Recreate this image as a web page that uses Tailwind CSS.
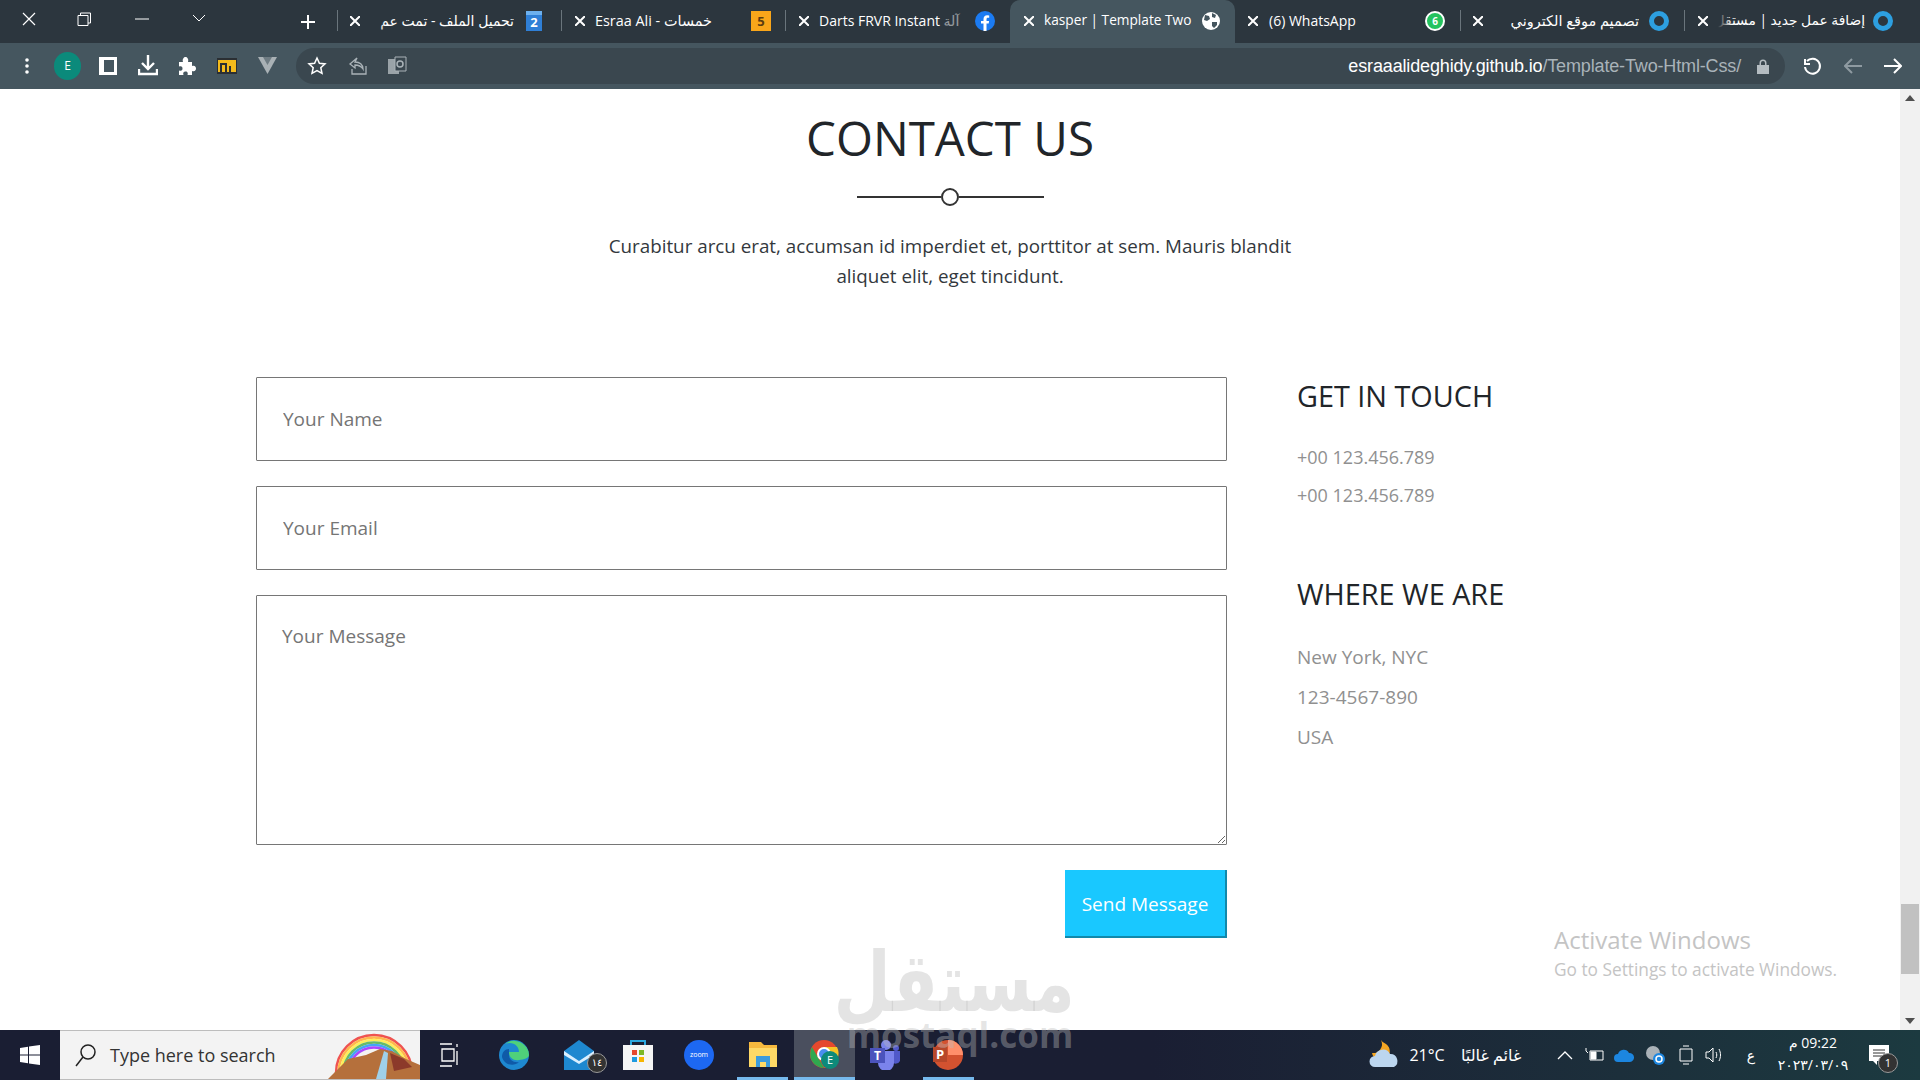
<!DOCTYPE html>
<html lang="en">
<head>
    <meta charset="UTF-8">
    <title>kasper | Template Two</title>
    <script src="https://cdn.jsdelivr.net/npm/@tailwindcss/browser@4"></script>
</head>
<body class="relative w-[1920px] h-[1080px] overflow-hidden bg-white font-['Open_Sans','DejaVu_Sans',sans-serif]">
<div class="flex flex-col h-full">

    <!-- tab strip -->
    <div class="flex items-center h-[43px] bg-[#2c363e] text-white shrink-0">
        <div class="flex items-center w-[337px] h-full shrink-0 relative">
            <svg class="absolute left-[21px] top-[11px]" width="16" height="16" viewBox="0 0 16 16" stroke="#fff" stroke-width="1.2" fill="none"><path d="M2 2l12 12M14 2L2 14"/></svg>
            <svg class="absolute left-[77px] top-[12px]" width="14" height="14" viewBox="0 0 14 14" stroke="#fff" stroke-width="1" fill="none"><path d="M1 3.5h10v10H1zM3.5 3.500V1h10v10h-2.500"/></svg>
            <svg class="absolute left-[135px] top-[12px]" width="14" height="14" viewBox="0 0 14 14" stroke="#fff" stroke-width="1" fill="none"><path d="M0 7h14"/></svg>
            <svg class="absolute left-[192px] top-[14px]" width="14" height="9" viewBox="0 0 14 9" stroke="#fff" stroke-width="1" fill="none"><path d="M1 1l6 6 6-6"/></svg>
            <svg class="absolute left-[300px] top-[14px]" width="16" height="16" viewBox="0 0 16 16" stroke="#fff" stroke-width="2" fill="none"><path d="M8 1v14M1 8h14"/></svg>
        </div>

        <div class="flex items-center w-[224px] h-full relative text-[14px] pb-[2px]">
            <div class="absolute left-0 top-[10px] h-[21px] w-px bg-[#6a757c]"></div>
            <svg class="ml-[13px] shrink-0" width="10" height="10" viewBox="0 0 10 10" stroke="#fff" stroke-width="2"><path d="M0 0l10 10M10 0L0 10"/></svg>
            <div class="ml-[10px] w-[144px] overflow-hidden whitespace-nowrap text-right relative" dir="rtl">تحميل الملف - تمت عم<div class="absolute left-0 top-0 h-full w-[14px] bg-gradient-to-r from-[#2c363e] to-transparent"></div></div>
            <svg class="ml-[12px] shrink-0" width="16" height="20" viewBox="0 0 16 20"><path d="M0 0h16v20H0z" fill="#2f7fd6"/><path d="M0 0h16v4H0z" fill="#6cb0ee"/><text x="8" y="16" font-size="13" font-weight="700" text-anchor="middle" fill="#fff">2</text></svg>
        </div>

        <div class="flex items-center w-[224px] h-full relative text-[14px] pb-[2px]">
            <div class="absolute left-0 top-[10px] h-[21px] w-px bg-[#6a757c]"></div>
            <svg class="ml-[14px] shrink-0" width="10" height="10" viewBox="0 0 10 10" stroke="#fff" stroke-width="2"><path d="M0 0l10 10M10 0L0 10"/></svg>
            <div class="ml-[10px] w-[150px] whitespace-nowrap text-left text-[14.400px]" dir="rtl">خمسات - Esraa Ali</div>
            <div class="ml-[6px] w-[20px] h-[20px] bg-[#f9a61a] text-[#5c3d10] text-[13px] font-bold leading-[20px] text-center shrink-0">5</div>
        </div>

        <div class="flex items-center w-[225px] h-full relative text-[14px] pb-[2px]">
            <div class="absolute left-0 top-[10px] h-[21px] w-px bg-[#6a757c]"></div>
            <svg class="ml-[14px] shrink-0" width="10" height="10" viewBox="0 0 10 10" stroke="#fff" stroke-width="2"><path d="M0 0l10 10M10 0L0 10"/></svg>
            <div class="ml-[10px] w-[145px] whitespace-nowrap relative">Darts FRVR Instant <span class="opacity-50">آلة</span></div>
            <svg class="ml-[11px] shrink-0" width="20" height="20" viewBox="0 0 20 20"><circle cx="10" cy="10" r="10" fill="#1b7bf2"/><path d="M8.500 20v-7.500H6V10h2.500V8c0-2.500 1.500-3.800 3.700-3.800l2 .2v2.300h-1.200c-1.200 0-1.500.7-1.500 1.500V10h2.600l-.4 2.500h-2.200V20z" fill="#fff"/></svg>
        </div>

        <div class="flex items-center w-[225px] h-full relative text-[13.700px] bg-[#45565f] rounded-t-[10px] pb-[2px]">
            <svg class="ml-[14px] shrink-0" width="10" height="10" viewBox="0 0 10 10" stroke="#fff" stroke-width="2"><path d="M0 0l10 10M10 0L0 10"/></svg>
            <div class="ml-[10px] w-[152px] whitespace-nowrap">kasper | Template Two</div>
            <svg class="ml-[6px] shrink-0" width="18" height="18" viewBox="0 0 18 18"><circle cx="9" cy="9" r="9" fill="#fff"/><path d="M3 3l4 1 1 3-3 2-3-1zM10 1l4 2-1 3-3-1zM10 10l5 0 0 3-3 3-2-2z" fill="#45565f"/></svg>
        </div>

        <div class="flex items-center w-[225px] h-full relative text-[14px] pb-[2px]">
            <svg class="ml-[13px] shrink-0" width="10" height="10" viewBox="0 0 10 10" stroke="#fff" stroke-width="2"><path d="M0 0l10 10M10 0L0 10"/></svg>
            <div class="ml-[11px] w-[156px] whitespace-nowrap">(6) WhatsApp</div>
            <div class="w-[20px] h-[20px] rounded-full bg-[#25c35f] border-2 border-white text-[10px] font-bold leading-[16px] text-center shrink-0">6</div>
        </div>

        <div class="flex items-center w-[224px] h-full relative text-[14px] pb-[2px]">
            <div class="absolute left-0 top-[10px] h-[21px] w-px bg-[#6a757c]"></div>
            <svg class="ml-[13px] shrink-0" width="10" height="10" viewBox="0 0 10 10" stroke="#fff" stroke-width="2"><path d="M0 0l10 10M10 0L0 10"/></svg>
            <div class="ml-[10px] w-[146px] overflow-hidden whitespace-nowrap text-right relative text-[14.500px]" dir="rtl">تصميم موقع الكتروني<div class="absolute left-0 top-0 h-full w-[8px] bg-gradient-to-r from-[#2c363e] to-transparent"></div></div>
            <div class="ml-[10px] w-[20px] h-[20px] rounded-full border-[5px] border-[#2d9fe0] shrink-0"></div>
        </div>

        <div class="flex items-center flex-1 h-full relative text-[13.800px] pb-[2px]">
            <div class="absolute left-0 top-[10px] h-[21px] w-px bg-[#6a757c]"></div>
            <svg class="ml-[14px] shrink-0" width="10" height="10" viewBox="0 0 10 10" stroke="#fff" stroke-width="2"><path d="M0 0l10 10M10 0L0 10"/></svg>
            <div class="ml-[10px] w-[147px] overflow-hidden whitespace-nowrap text-right relative" dir="rtl">إضافة عمل جديد | مستقل<div class="absolute left-0 top-0 h-full w-[14px] bg-gradient-to-r from-[#2c363e] to-transparent"></div></div>
            <div class="ml-[8px] w-[20px] h-[20px] rounded-full border-[5px] border-[#2d9fe0] shrink-0"></div>
        </div>
    </div>

    <!-- toolbar -->
    <div class="flex items-center h-[46px] bg-[#45565f] shrink-0 text-white">
        <div class="flex items-center w-[296px] h-full shrink-0 relative">
            <svg class="absolute left-[25px] top-[15px]" width="4" height="16" viewBox="0 0 4 16" fill="#fff"><circle cx="2" cy="2" r="1.800"/><circle cx="2" cy="8" r="1.800"/><circle cx="2" cy="14" r="1.800"/></svg>
            <div class="absolute left-[54px] top-[9px] w-[27px] h-[28px] rounded-full bg-[#0b8a7b] text-[12px] leading-[28px] text-center">E</div>
            <svg class="absolute left-[99px] top-[14px]" width="18" height="18" viewBox="0 0 18 18"><path d="M0 0h18v18H0z" fill="#fff"/><path d="M5 3h10v12H5z" fill="#45565f"/></svg>
            <svg class="absolute left-[138px] top-[12px]" width="20" height="21" viewBox="0 0 20 21" stroke="#fff" stroke-width="2.400" fill="none"><path d="M10 0v13M4 8l6 6 6-6M1 14v5h18v-5"/></svg>
            <svg class="absolute left-[178px] top-[14px]" width="18" height="18" viewBox="0 0 18 18" fill="#fff"><path d="M1 5h4c-1-3 1-5 2.500-5S11 2 10 5h4v4c3-1 4 1 4 2.500S17 15 14 14v4H9.500c1-3-1-3.500-2-3.500S4.500 15 5.500 18H1v-4.500c3 1 3.500-1 3.500-2S4 8.500 1 9.500z"/></svg>
            <svg class="absolute left-[217px] top-[15px]" width="20" height="16" viewBox="0 0 20 16"><path d="M0 0h20v16H0z" fill="#2b2f33"/><path d="M1 2h18v12H1z" fill="#f4bb1b"/><path d="M3 5h7v9H8V7H5v7H3zM12 8h2v6h-2z" fill="#2b2f33"/></svg>
            <svg class="absolute left-[258px] top-[14px]" width="19" height="17" viewBox="0 0 19 17"><path d="M0 0h19L9.500 17z" fill="#a9b1b5"/><path d="M5 0h9l-4.500 8z" fill="#6f7c83"/></svg>
        </div>
        <div class="flex items-center justify-between w-[1489px] h-[36px] rounded-full bg-[#3a474f] shrink-0 pl-[11px] pr-[16px]">
            <div class="flex items-center gap-[20px]">
                <svg width="20" height="20" viewBox="0 0 20 20" fill="none" stroke="#fff" stroke-width="1.500"><path d="M10 2l2.400 5.300 5.600.6-4.200 3.800 1.200 5.600L10 14.500l-5 2.800 1.200-5.600L2 7.900l5.600-.6z"/></svg>
                <svg width="20" height="20" viewBox="0 0 20 20" fill="none" stroke="#aab3b8" stroke-width="1.300"><path d="M10 2L3 8l5 4V9c3 0 6 1 8 4-.3-4-3-7-8-7zM5 13v5h14v-8"/></svg>
                <svg width="20" height="20" viewBox="0 0 20 20"><path d="M1 3h11v15H1z" fill="#9aa3a8"/><path d="M8 1h11v14H8z" fill="#3a474f" stroke="#aab3b8"/><circle cx="13" cy="8" r="3" fill="none" stroke="#aab3b8" stroke-width="1.500"/></svg>
            </div>
            <div class="flex items-center">
                <span class="text-[18px] tracking-[-0.15px] font-['Liberation_Sans',sans-serif]">esraaalideghidy.github.io<span class="text-[#a9b3b9]">/Template-Two-Html-Css/</span></span>
                <svg class="ml-[16px]" width="12" height="15" viewBox="0 0 12 15" fill="#b4bcc1"><path d="M0 6h12v9H0zM2.500 6V4a3.500 3.500 0 017 0v2H8V4a2 2 0 00-4 0v2z"/></svg>
            </div>
        </div>
        <div class="flex items-center flex-1 gap-[22px] pl-[18px]">
            <svg width="19" height="19" viewBox="0 0 19 19" fill="none" stroke="#fff" stroke-width="2"><path d="M4 4a7.500 7.500 0 11-2 6M2 2v5h5"/></svg>
            <svg width="18" height="16" viewBox="0 0 18 16" fill="none" stroke="#8e9aa1" stroke-width="2"><path d="M18 8H2M8 1L1 8l7 7"/></svg>
            <svg width="18" height="16" viewBox="0 0 18 16" fill="none" stroke="#fff" stroke-width="2"><path d="M0 8h16M10 1l7 7-7 7"/></svg>
        </div>
    </div>

    <!-- page + scrollbar -->
    <div class="flex flex-1 min-h-0">
        <main class="w-[1900px] shrink-0 flex flex-col items-center pt-[13px] text-[#212529]">
            <h1 class="text-[47.500px] leading-[72px] font-normal">CONTACT US</h1>
            <div class="flex items-center w-[187px] mt-[14px]">
                <div class="flex-1 h-[2px] bg-[#333]"></div>
                <div class="w-[18px] h-[18px] rounded-full border-2 border-[#333]"></div>
                <div class="flex-1 h-[2px] bg-[#333]"></div>
            </div>
            <p class="mt-[25px] w-[700px] text-center text-[18.800px] leading-[30px] text-[#33383d]">Curabitur arcu erat, accumsan id imperdiet et, porttitor at sem. Mauris blandit aliquet elit, eget tincidunt.</p>

            <div class="flex w-[1388px] gap-[70px] mt-[86px]">
                <form class="w-[971px] flex flex-col items-end shrink-0">
                    <input class="w-full h-[84px] border border-[#767676] rounded-[1px] px-[26px] text-[19px] placeholder:text-[#757575]" placeholder="Your Name">
                    <input class="w-full h-[84px] mt-[25px] border border-[#767676] rounded-[1px] px-[26px] text-[19px] placeholder:text-[#757575]" placeholder="Your Email">
                    <textarea class="w-full h-[250px] mt-[25px] border border-[#767676] rounded-[1px] px-[25px] py-[26px] text-[19px] placeholder:text-[#757575]" placeholder="Your Message"></textarea>
                    <button type="button" class="w-[162px] h-[68px] mt-[25px] pt-[2px] bg-[#19c8ff] border-b-2 border-r-2 border-[#1289ab] text-white text-[19px]">Send Message</button>
                </form>
                <div class="flex-1 -mt-[1px]">
                    <h2 class="text-[28.800px] leading-[40px]">GET IN TOUCH</h2>
                    <p class="mt-[22px] text-[18px] leading-[38px] text-[#909090]">+00 123.456.789</p>
                    <p class="text-[18px] leading-[38px] text-[#909090]">+00 123.456.789</p>
                    <h2 class="mt-[60px] text-[28.800px] leading-[40px]">WHERE WE ARE</h2>
                    <p class="mt-[23px] text-[19px] leading-[40px] text-[#909090]">New York, NYC</p>
                    <p class="text-[19px] leading-[40px] text-[#909090]">123-4567-890</p>
                    <p class="text-[19px] leading-[40px] text-[#909090]">USA</p>
                </div>
            </div>
        </main>
        <div class="w-[20px] bg-[#f1f1f1] flex flex-col items-center justify-between py-[6px] relative">
            <svg width="10" height="6" viewBox="0 0 10 6" fill="#505050"><path d="M5 0l5 6H0z"/></svg>
            <div class="absolute left-[1px] top-[815px] w-[18px] h-[70px] bg-[#c1c1c1]"></div>
            <svg width="10" height="6" viewBox="0 0 10 6" fill="#505050"><path d="M5 6l5-6H0z"/></svg>
        </div>
    </div>

    <!-- windows taskbar -->
    <div class="flex items-center h-[50px] shrink-0 bg-gradient-to-r from-[#1a1e33] from-60% to-[#1c3a40] text-white">
        <div class="w-[60px] flex justify-center shrink-0">
            <svg width="20" height="20" viewBox="0 0 20 20" fill="#fff"><path d="M0 3l8-1.200V9.500H0zM9 1.600L20 0v9.500H9zM0 10.500h8v7.700L0 17zM9 10.500h11V20L9 18.400z"/></svg>
        </div>
        <div class="flex items-center w-[360px] h-full shrink-0 bg-[#f3f3f3] border-y border-[#bdbdbd] relative overflow-hidden">
            <svg class="ml-[15px]" width="22" height="24" viewBox="0 0 22 24" fill="none" stroke="#222" stroke-width="1.500"><circle cx="13" cy="9" r="7"/><path d="M8 14L1 23"/></svg>
            <span class="ml-[13px] text-[18px] text-[#333]">Type here to search</span>
            <svg class="absolute right-0 bottom-0" width="92" height="50" viewBox="0 0 92 50" fill="none">
                <circle cx="46" cy="44" r="38" stroke="#ef5350" stroke-width="2.500"/>
                <circle cx="46" cy="44" r="35.500" stroke="#ffb74d" stroke-width="2.500"/>
                <circle cx="46" cy="44" r="33" stroke="#ffee58" stroke-width="2.500"/>
                <circle cx="46" cy="44" r="30.500" stroke="#66bb6a" stroke-width="2.500"/>
                <circle cx="46" cy="44" r="28" stroke="#42a5f5" stroke-width="2.500"/>
                <circle cx="46" cy="44" r="25.500" stroke="#ab47ff" stroke-width="2.500"/>
                <path d="M0 50l20-20 18-4 14-6 12 2 14 8 14 6v14z" fill="#b5703c"/>
                <path d="M56 22l-8 28h10l2-26z" fill="#9fd0ea"/>
                <path d="M62 24l14 6 8 8-18 4z" fill="#8c3a2a"/>
            </svg>
        </div>
        <div class="flex items-center h-full shrink-0 relative">
            <div class="w-[60px] flex justify-center"><svg width="20" height="24" viewBox="0 0 20 24" fill="none" stroke="#fff" stroke-width="1.300"><path d="M0 1h12M0 23h12M2 6h12v12H2zM17 1v3M17 8v14"/></svg></div>
            <div class="w-[68px] flex justify-center"><svg width="30" height="30" viewBox="0 0 30 30"><circle cx="15" cy="15" r="15" fill="#1e88d0"/><path d="M30 15a15 15 0 00-24-11c8-3 14 2 14 8H10c0 6 5 9 10 8 5-.5 10-2 10-5z" fill="#4fd17a"/><path d="M10 15c0 5 5 8 10 7-5 5-15 3-17-5 0-5 3-8 7-8z" fill="#0f5aa8"/></svg></div>
            <div class="w-[62px] flex justify-center relative"><svg width="30" height="30" viewBox="0 0 30 30"><path d="M0 11L15 0l15 11v19H0z" fill="#1e88d0"/><path d="M0 11l15 10 15-10v4L15 24 0 15z" fill="#d9efff"/></svg><div class="absolute left-[39px] top-[13px] w-[20px] h-[20px] rounded-full bg-[#333] border border-[#999] text-[10px] leading-[17px] text-center">١٤</div></div>
            <div class="w-[56px] flex justify-center"><svg width="30" height="30" viewBox="0 0 30 30"><path d="M0 5h30v25H0z" fill="#f5f5f5"/><path d="M8 5V1h14v4" stroke="#2aa7df" stroke-width="2" fill="none"/><path d="M9 10h5v5H9z" fill="#e5482d"/><path d="M16 10h5v5h-5z" fill="#7db928"/><path d="M9 17h5v5H9z" fill="#1e9be0"/><path d="M16 17h5v5h-5z" fill="#f7b500"/></svg></div>
            <div class="w-[66px] flex justify-center"><div class="w-[30px] h-[30px] rounded-full bg-[#1d68f2] text-[7px] leading-[30px] text-center">zoom</div></div>
            <div class="w-[62px] flex justify-center"><svg width="28" height="26" viewBox="0 0 28 26"><path d="M0 0h12l3 3h13v22H0z" fill="#f7b93e"/><path d="M0 6h28v19H0z" fill="#ffd966"/><path d="M7 14h14v11h-4v-5h-6v5H7z" fill="#3d9bdc"/></svg></div>
            <div class="w-[61px] h-full bg-[#4a4f5e] flex justify-center items-center relative"><svg width="30" height="30" viewBox="0 0 30 30"><circle cx="14" cy="14" r="14" fill="#e5482d"/><path d="M14 28A14 14 0 012 7l8 14z" fill="#2fa84f"/><path d="M14 7h13a14 14 0 01-9 20z" fill="#f7c325"/><circle cx="14" cy="14" r="6" fill="#4a8ef0" stroke="#fff" stroke-width="2"/><circle cx="20" cy="20" r="9" fill="#0e8a7a"/><text x="20" y="24" font-size="11" text-anchor="middle" fill="#fff">E</text></svg></div>
            <div class="w-[60px] flex justify-center"><svg width="30" height="30" viewBox="0 0 30 30"><circle cx="16" cy="5" r="5" fill="#7b83eb"/><circle cx="26" cy="8" r="3" fill="#5059c9"/><path d="M21 11h9v10a5 5 0 01-9 0z" fill="#5059c9"/><path d="M8 11h16v12a8 8 0 01-16 0z" fill="#7b83eb"/><path d="M0 8h15v15H0z" fill="#4b53bc"/><text x="7.500" y="20" font-size="12" font-weight="700" text-anchor="middle" fill="#fff">T</text></svg></div>
            <div class="w-[66px] flex justify-center"><svg width="30" height="30" viewBox="0 0 30 30"><circle cx="15" cy="15" r="15" fill="#d35230"/><path d="M15 0a15 15 0 0115 15H15z" fill="#ff8f6b"/><path d="M0 7h14v15H0z" fill="#b7472a"/><text x="7" y="19" font-size="13" font-weight="700" text-anchor="middle" fill="#fff">P</text></svg></div>
        </div>
        <div class="flex-1"></div>
        <div class="flex items-center h-full shrink-0 relative pr-[31px] text-[14px]">
            <svg class="mr-[8px]" width="32" height="32" viewBox="0 0 32 32"><path d="M12 1a9 9 0 01-9 13 9 9 0 1014-9 9 9 0 01-5-4z" fill="#f5a623"/><path d="M6 28a5 5 0 010-11 8 8 0 0115-2 7 7 0 014 13z" fill="#bcd6ef"/></svg>
            <span class="text-[16px] mr-[13px]">21°C</span>
            <span class="text-[16px] w-[67px] mr-[32px] text-center whitespace-nowrap" dir="rtl">غائم غالبًا</span>
            <svg class="mr-[12px]" width="16" height="10" viewBox="0 0 16 10" fill="none" stroke="#fff" stroke-width="1.300"><path d="M1 9l7-7 7 7"/></svg>
            <svg class="mr-[10px]" width="19" height="14" viewBox="0 0 19 14" fill="none" stroke="#fff"><path d="M5 3h13v9H5zM1 0v3l2 2"/><path d="M6 4h5v7H6z" fill="#fff"/></svg>
            <svg class="mr-[11px]" width="20" height="13" viewBox="0 0 20 13"><path d="M4 13a4 4 0 010-8 6 6 0 0111-1 4.500 4.500 0 011 9z" fill="#1c86e0"/></svg>
            <svg class="mr-[14px]" width="20" height="20" viewBox="0 0 20 20"><circle cx="8" cy="8" r="7" fill="#aab2b8"/><circle cx="14" cy="14" r="6" fill="#1c86e0"/><circle cx="14" cy="14" r="3" fill="none" stroke="#fff" stroke-width="1.500"/></svg>
            <svg class="mr-[12px]" width="14" height="20" viewBox="0 0 14 20" fill="none" stroke="#fff"><path d="M1 4h12v12H1zM4 1h6M4 19h6"/></svg>
            <svg class="mr-[22px]" width="20" height="18" viewBox="0 0 20 18" fill="none" stroke="#fff"><path d="M1 6h3l4-4v14l-4-4H1zM11 6c1 2 1 4 0 6M14 3c2 4 2 8 0 12"/></svg>
            <span class="text-[14px] mr-[22px]">ع</span>
            <div class="flex flex-col items-center leading-[22px] -mt-[2px] mr-[20px] w-[72px]">
                <span class="text-[14px]" dir="rtl">09:22 م</span>
                <span class="text-[14px]">٢٠٢٣/٠٣/٠٩</span>
            </div>
            <div class="relative">
                <svg width="20" height="20" viewBox="0 0 20 20"><path d="M0 0h20v16H8v4l-4-4H0z" fill="#fff"/><path d="M4 5h12M4 8h12M4 11h12" stroke="#333"/></svg>
                <div class="absolute left-[9px] top-[8px] w-[20px] h-[20px] rounded-full bg-[#333] border border-[#999] text-[11px] leading-[18px] text-center">1</div>
            </div>
        </div>
    </div>
</div>

<!-- taskbar active app lines -->
<div class="absolute left-[737px] top-[1077px] w-[51px] h-[3px] bg-[#76b9ed]"></div>
<div class="absolute left-[794px] top-[1077px] w-[61px] h-[3px] bg-[#76b9ed]"></div>
<div class="absolute left-[923px] top-[1077px] w-[51px] h-[3px] bg-[#76b9ed]"></div>

<!-- activate windows notice -->
<div class="absolute left-[1554px] top-[923px] text-[#c4c4c4] pointer-events-none">
    <p class="text-[24px] leading-[34px]">Activate Windows</p>
    <p class="text-[17.300px] leading-[24px] mt-[1px]">Go to Settings to activate Windows.</p>
</div>

<!-- mostaql watermark -->
<div class="absolute left-[845px] top-[954px] w-[230px] text-center text-[#bcbcbc]/40 pointer-events-none">
    <p class="text-[66px] leading-[58px] font-bold font-['DejaVu_Sans',sans-serif] scale-y-[1.25] whitespace-nowrap" dir="rtl">مستقل</p>
    <p class="text-[35px] leading-[46px] font-bold font-['Open_Sans',sans-serif] whitespace-nowrap">mostaql.com</p>
</div>
</body>
</html>
